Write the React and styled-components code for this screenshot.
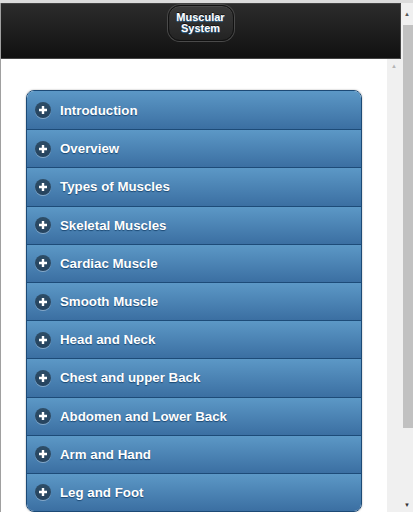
import React from 'react';
import styled, { createGlobalStyle } from 'styled-components';

const GlobalStyle = createGlobalStyle`
  html, body {
    margin: 0;
    padding: 0;
    background: #fff;
    overflow: hidden;
  }
  * { box-sizing: border-box; }
`;

const Page = styled.div`
  display: flex;
  width: 413px;
  height: 512px;
  border-top: 3px solid #dcdcdc;
  font-family: "Liberation Sans", Arial, sans-serif;
`;

const Main = styled.div`
  flex: 1;
  display: flex;
  flex-direction: column;
  border-left: 1px solid #a0a0a0;
  min-width: 0;
`;

const Header = styled.div`
  height: 56px;
  flex-shrink: 0;
  background: linear-gradient(#2c2c2c, #111);
  border: 1px solid #444;
  border-left: none;
  display: flex;
  justify-content: center;
  align-items: flex-start;
  padding-top: 1px;
`;

const TitleButton = styled.div`
  width: 66px;
  height: 36px;
  border-radius: 12px;
  border: 1px solid #111;
  background: linear-gradient(#3a3a3a, #232323);
  box-shadow: 0 0 0 1px #4a4a4a, inset 0 1px 0 rgba(255, 255, 255, 0.08);
  color: #fff;
  font-weight: bold;
  font-size: 11px;
  line-height: 11px;
  text-align: center;
  display: flex;
  align-items: center;
  justify-content: center;
  padding-bottom: 1px;
  text-shadow: 0 1px 1px #3373a5, 0 -1px 0 #111;
`;

const Body = styled.div`
  flex: 1;
  display: flex;
  min-height: 0;
`;

const Content = styled.div`
  flex: 1;
  padding: 31px 25px 0 25px;
  overflow: hidden;
`;

const Track = styled.div`
  width: ${({ w }) => w}px;
  flex-shrink: 0;
  background: #f0f0f0;
  display: flex;
  flex-direction: column;
  align-items: stretch;
  padding-top: ${({ pt }) => pt || 0}px;
`;

const Arrow = styled.div`
  height: ${({ h }) => h}px;
  display: flex;
  align-items: center;
  justify-content: center;
  color: ${({ c }) => c};
  font-size: 6px;
  line-height: 1;
  flex-shrink: 0;
`;

const Thumb = styled.div`
  height: 403px;
  margin-left: 2px;
  background: #c1c1c1;
`;

const Spacer = styled.div`
  flex: 1;
`;

const Accordion = styled.div`
  border: 1px solid #1c4a76;
  border-radius: 8px;
  overflow: hidden;
  box-shadow: 0 0 2px rgba(0, 0, 0, 0.35);
`;

const Row = styled.div`
  height: 38.2px;
  display: flex;
  align-items: center;
  padding-left: 8px;
  gap: 9px;
  background: linear-gradient(#5c98c6, #3b6fa2);
  border-top: ${({ first }) => (first ? 'none' : '1px solid #1d4b78')};
  color: #fff;
  font-weight: bold;
  font-size: 13.3px;
  text-shadow: 0 1px 1px #1a4772;
`;

const Icon = styled.span`
  width: 16px;
  height: 16px;
  border-radius: 50%;
  background: rgba(0, 0, 0, 0.45);
  box-shadow: 0 1px 0 rgba(255, 255, 255, 0.35);
  display: flex;
  align-items: center;
  justify-content: center;
  flex-shrink: 0;
`;

const items = [
  'Introduction',
  'Overview',
  'Types of Muscles',
  'Skeletal Muscles',
  'Cardiac Muscle',
  'Smooth Muscle',
  'Head and Neck',
  'Chest and upper Back',
  'Abdomen and Lower Back',
  'Arm and Hand',
  'Leg and Foot',
];

const Plus = () => (
  <svg width="10" height="10" viewBox="0 0 10 10">
    <path d="M5 1v8M1 5h8" stroke="#fff" strokeWidth="2.4" />
  </svg>
);

export default function App() {
  return (
    <>
      <GlobalStyle />
      <Page>
        <Main>
          <Header>
            <TitleButton>
              Muscular
              <br />
              System
            </TitleButton>
          </Header>
          <Body>
            <Content>
              <Accordion>
                {items.map((t, i) => (
                  <Row key={t} first={i === 0}>
                    <Icon>
                      <Plus />
                    </Icon>
                    {t}
                  </Row>
                ))}
              </Accordion>
            </Content>
            <Track w={14} pt={2}>
              <Arrow h={10} c="#b5b5b5">▲</Arrow>
            </Track>
          </Body>
        </Main>
        <Track w={12}>
          <Arrow h={22} c="#555">▲</Arrow>
          <Thumb />
          <Spacer />
          <Arrow h={14} c="#333">▼</Arrow>
        </Track>
      </Page>
    </>
  );
}
